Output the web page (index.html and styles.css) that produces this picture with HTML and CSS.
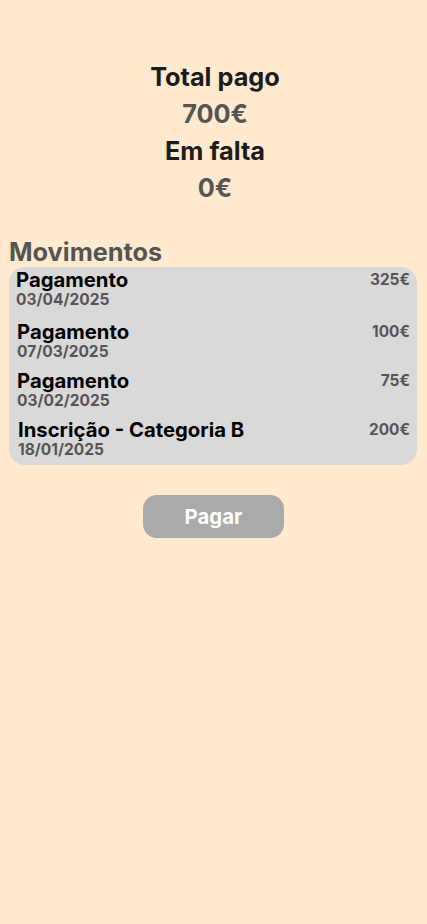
FILE: index.html
```html
<!DOCTYPE html>
<html lang="pt">
<head>
<meta charset="utf-8">
<link rel="stylesheet" href="styles.css">
</head>
<body>
<main class="page">
  <section class="summary">
    <div class="label">Total pago</div>
    <div class="value">700€</div>
    <div class="label">Em falta</div>
    <div class="value">0€</div>
  </section>
  <section class="moves">
    <h2 class="moves-title">Movimentos</h2>
    <div class="card">
      <div class="row r1">
        <div class="info"><div class="name">Pagamento</div><div class="date">03/04/2025</div></div>
        <div class="amount">325€</div>
      </div>
      <div class="row r2">
        <div class="info"><div class="name">Pagamento</div><div class="date">07/03/2025</div></div>
        <div class="amount">100€</div>
      </div>
      <div class="row r3">
        <div class="info"><div class="name">Pagamento</div><div class="date">03/02/2025</div></div>
        <div class="amount">75€</div>
      </div>
      <div class="row r4">
        <div class="info"><div class="name">Inscrição - Categoria B</div><div class="date">18/01/2025</div></div>
        <div class="amount">200€</div>
      </div>
    </div>
  </section>
  <div class="actions"><button class="pay">Pagar</button></div>
</main>
</body>
</html>
```
FILE: styles.css
```css
html, body { margin: 0; padding: 0; }
body {
  background: #ffe9cf;
  font-family: Inter, "Noto Sans", sans-serif;
  width: 427px;
  min-height: 924px;
}
.page { display: flex; flex-direction: column; }
.summary {
  display: flex; flex-direction: column; align-items: center;
  padding-top: 58px; padding-left: 3px;
}
.label { font-size: 25.3px; font-weight: 700; color: #1c1c1c; line-height: 37px; height: 37px; }
.value { font-size: 25.3px; font-weight: 700; color: #555555; line-height: 37px; height: 37px; }
.moves { padding: 0 10px 0 9px; margin-top: 31px; }
.moves-title { margin: 0; font-size: 25.3px; font-weight: 700; color: #555555; line-height: 30px; height: 30px; }
.card {
  background: #d9d9d9; border-radius: 16px;
  padding: 2px 7px 6px 7px;
  display: flex; flex-direction: column;
}
.row { display: flex; justify-content: space-between; align-items: flex-start; }
.r2 { margin-top: 12px; padding-left: 1px; }
.r3 { margin-top: 9px; padding-left: 1px; }
.r4 { margin-top: 9px; padding-left: 2px; }
.name { font-size: 20.3px; font-weight: 700; color: #000; line-height: 22px; height: 22px; }
.date { font-size: 15.5px; font-weight: 700; color: #555555; line-height: 18px; height: 18px; }
.amount { font-size: 15.4px; font-weight: 700; color: #555555; line-height: 22px; }
.actions { display: flex; justify-content: center; margin-top: 30px; }
.pay {
  width: 141px; height: 43px; border: none; border-radius: 14px; padding: 0;
  background: #aaaaaa; color: #fff;
  font-family: Inter, "Noto Sans", sans-serif; font-size: 20.4px; font-weight: 700;
}
```
